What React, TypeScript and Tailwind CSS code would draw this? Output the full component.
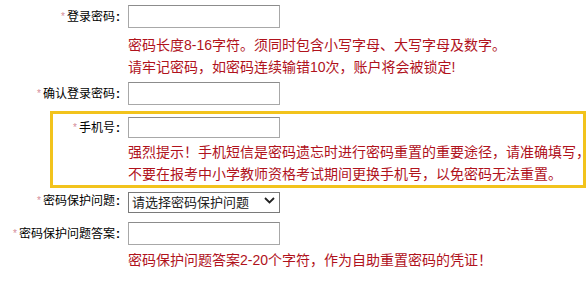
import React from "react";

function Label({ text, width }: { text: string; width: string }) {
  return (
    <label className={`${width} shrink-0 flex items-center justify-end text-[12px] text-black`}>
      <span className="text-[10px] text-[#d48c9a] mr-[2px] leading-none">*</span>
      <span>{text}</span>
      <span className="font-bold ml-[1px] mr-[1px]">:</span>
    </label>
  );
}

function TextInput({ h = "h-[23px]" }: { h?: string }) {
  return (
    <input
      type="text"
      className={`ml-[7px] w-[152px] ${h} border border-[#a8a8a8] border-t-[#8c8c8c] bg-white outline-none`}
    />
  );
}

function Hint({ children, mt }: { children: React.ReactNode; mt: string }) {
  return (
    <p className={`ml-[128px] ${mt} w-max text-[14px] leading-[22px] text-[#b0121c] whitespace-nowrap`}>
      {children}
    </p>
  );
}

export default function App() {
  return (
    <div className="w-[586px] h-[283px] overflow-hidden bg-white pt-[5px] font-['Liberation_Sans','Noto_Sans_CJK_SC',sans-serif]">
      <div className="flex items-center h-[23px]">
        <Label text="登录密码" width="w-[121px]" />
        <TextInput />
      </div>
      <Hint mt="mt-[6px]">
        密码长度8-16字符。须同时包含小写字母、大写字母及数字。
        <br />
        请牢记密码，如密码连续输错10次，账户将会被锁定!
      </Hint>

      <div className="flex items-center h-[23px] mt-[4px]">
        <Label text="确认登录密码" width="w-[121px]" />
        <TextInput />
      </div>

      <div className="mt-[6px] ml-[50px] w-[536px] border-[3px] border-[#f2c31c] pt-[3px]">
        <div className="flex items-center h-[21px]">
          <Label text="手机号" width="w-[68px]" />
          <TextInput h="h-[21px]" />
        </div>
        <p className="ml-[75px] mt-[3px] w-max text-[14px] leading-[22px] text-[#b0121c] whitespace-nowrap">
          强烈提示！手机短信是密码遗忘时进行密码重置的重要途径，请准确填写，
          <br />
          不要在报考中小学教师资格考试期间更换手机号，以免密码无法重置。
        </p>
      </div>

      <div className="flex items-center h-[21px] mt-[2px]">
        <Label text="密码保护问题" width="w-[121px]" />
        <div className="relative ml-[7px] w-[152px] h-[21px]">
          <select className="appearance-none w-full h-full border border-[#7a7a7a] bg-white pl-[3px] text-[13px] text-[#222] outline-none">
            <option>请选择密码保护问题</option>
          </select>
          <svg
            className="absolute right-[5px] top-[7px] pointer-events-none"
            width="11"
            height="7"
            viewBox="0 0 11 7"
          >
            <path d="M1 1 L5.5 5.5 L10 1" fill="none" stroke="#222" strokeWidth="1.8" />
          </svg>
        </div>
      </div>

      <div className="flex items-center h-[23px] mt-[11px]">
        <Label text="密码保护问题答案" width="w-[121px]" />
        <TextInput />
      </div>
      <Hint mt="mt-[4px]">密码保护问题答案2-20个字符，作为自助重置密码的凭证！</Hint>
    </div>
  );
}
